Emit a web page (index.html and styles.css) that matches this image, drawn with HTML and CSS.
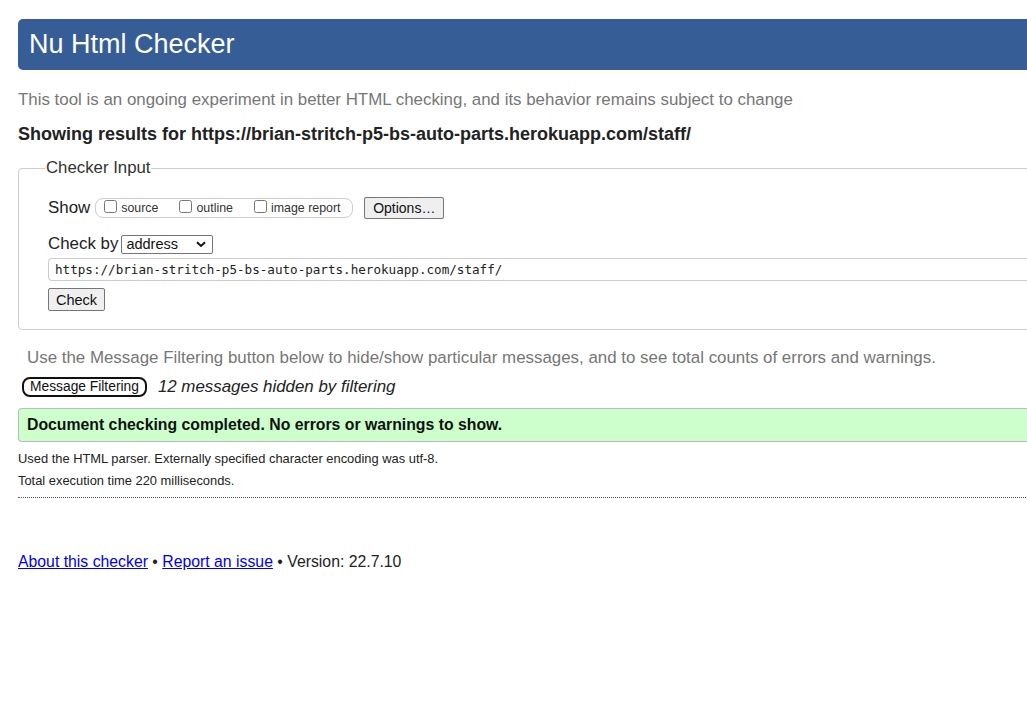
FILE: index.html
```html
<!DOCTYPE html>
<html lang="en">
<head>
<meta charset="utf-8">
<title>Showing results for https://brian-stritch-p5-bs-auto-parts.herokuapp.com/staff/ - Nu Html Checker</title>
<link rel="stylesheet" href="styles.css">
</head>
<body>
<div class="page">
  <h1 class="banner">Nu Html Checker</h1>
  <p class="tagline">This tool is an ongoing experiment in better HTML checking, and its behavior remains subject to change</p>
  <p class="results-for">Showing results for https://brian-stritch-p5-bs-auto-parts.herokuapp.com/staff/</p>
  <fieldset class="input-box">
    <legend class="input-legend">Checker Input</legend>
    <div class="show-row">
      <span class="show-label">Show</span>
      <span class="show-group">
        <label class="opt"><input type="checkbox" class="cb">source</label>
        <label class="opt"><input type="checkbox" class="cb">outline</label>
        <label class="opt"><input type="checkbox" class="cb">image report</label>
      </span>
      <button class="btn btn-options" type="button">Options…</button>
    </div>
    <div class="checkby-row">
      <span class="show-label">Check by</span>
      <span class="select">address<svg class="chev" width="10" height="7" viewBox="0 0 10 7"><path d="M1 1.2 L5 5 L9 1.2" fill="none" stroke="#111" stroke-width="1.9"/></svg></span>
    </div>
    <div class="url-field">https://brian-stritch-p5-bs-auto-parts.herokuapp.com/staff/</div>
    <div class="check-row"><button class="btn btn-check" type="button">Check</button></div>
  </fieldset>
  <p class="filter-note">Use the Message Filtering button below to hide/show particular messages, and to see total counts of errors and warnings.</p>
  <div class="filter-row">
    <button class="btn-filter" type="button">Message Filtering</button>
    <em class="hidden-count">12 messages hidden by filtering</em>
  </div>
  <div class="success">Document checking completed. No errors or warnings to show.</div>
  <p class="details">Used the HTML parser. Externally specified character encoding was utf-8.</p>
  <p class="details">Total execution time 220 milliseconds.</p>
  <hr class="dotted">
  <p class="footer"><a href="#">About this checker</a> • <a href="#">Report an issue</a> • Version: 22.7.10</p>
</div>
</body>
</html>
```
FILE: styles.css
```css
html, body {
  margin: 0;
  padding: 0;
  overflow: hidden;
  background: #fff;
}
body {
  font-family: "Liberation Sans", Arial, sans-serif;
  color: #222;
  font-size: 16px;
}
.page {
  width: 1060px;
  padding: 19px 0 0 18px;
}
.banner {
  margin: 0;
  height: 51px;
  background: #365d95;
  color: #fff;
  font-weight: normal;
  font-size: 27px;
  line-height: 51px;
  padding-left: 11px;
  border-radius: 5px;
}
.tagline {
  margin: 20px 0 0;
  color: #767676;
  font-size: 16.9px;
  line-height: 20px;
}
.results-for {
  margin: 14px 0 0;
  font-weight: bold;
  font-size: 18px;
  line-height: 20px;
  color: #222;
}
.input-box {
  margin: 14px 0 0;
  border: 1px solid #ccc;
  border-radius: 4px;
  padding: 4px 0 18px 29px;
  min-width: 0;
}
.input-legend {
  padding: 0 1px;
  margin-left: -3px;
  font-size: 16.8px;
  line-height: 20px;
  color: #333;
}
.show-row {
  display: flex;
  align-items: center;
  margin-top: 15px;
  height: 22px;
}
.show-label {
  font-size: 16.9px;
  color: #222;
  margin-right: 5px;
}
.show-group {
  display: inline-flex;
  align-items: center;
  border: 1px solid #ccc;
  border-radius: 8px;
  height: 20px;
  width: 258px;
  box-sizing: border-box;
  padding-left: 8px;
}
.opt {
  display: inline-flex;
  align-items: center;
  font-size: 12.4px;
  color: #333;
  margin-right: 21px;
}
.opt:last-child { margin-right: 0; }
.cb {
  margin: 0 4px 3px 0;
  width: 13px;
  height: 13px;
}
.btn {
  font-family: "Liberation Sans", Arial, sans-serif;
  background: #efefef;
  border: 1px solid #767676;
  border-radius: 2px;
  color: #111;
  padding: 0 6px;
  box-sizing: border-box;
}
.btn-options {
  margin-left: 11px;
  height: 22px;
  width: 80px;
  font-size: 14px;
}
.checkby-row {
  display: flex;
  align-items: center;
  margin-top: 15px;
  height: 20px;
}
.checkby-row .show-label { margin-right: 3px; }
.select {
  display: inline-flex;
  align-items: center;
  justify-content: space-between;
  width: 92px;
  height: 19px;
  box-sizing: border-box;
  border: 1px solid #767676;
  border-radius: 2px;
  font-size: 14.5px;
  padding: 0 6px 0 4px;
  color: #111;
}
.url-field {
  margin-top: 4px;
  height: 23px;
  box-sizing: border-box;
  border: 1px solid #ccc;
  border-right: none;
  border-radius: 4px 0 0 4px;
  font-family: "DejaVu Sans Mono", "Liberation Mono", monospace;
  font-size: 12.6px;
  line-height: 21px;
  padding-left: 6px;
  color: #222;
}
.check-row {
  margin-top: 7px;
}
.btn-check {
  height: 23px;
  width: 57px;
  font-size: 14.5px;
}
.filter-note {
  margin: 18px 0 0 9px;
  color: #767676;
  font-size: 16.9px;
  line-height: 20px;
}
.filter-row {
  display: flex;
  align-items: center;
  margin-top: 9px;
  margin-left: 4px;
  height: 20px;
}
.btn-filter {
  font-family: "Liberation Sans", Arial, sans-serif;
  font-size: 13.8px;
  background: #fff;
  color: #111;
  border: 2px solid #111;
  border-radius: 8px;
  height: 20px;
  padding: 0 6px;
  line-height: 14px;
}
.hidden-count {
  margin-left: 11px;
  font-size: 16.9px;
  color: #222;
}
.success {
  margin-top: 11px;
  height: 34px;
  box-sizing: border-box;
  background: #ccffcc;
  border: 1px solid #bbb;
  border-right: none;
  border-radius: 4px 0 0 4px;
  font-weight: bold;
  font-size: 15.8px;
  line-height: 31px;
  padding-left: 8px;
  color: #111;
}
.details {
  margin: 10px 0 0;
  font-size: 12.9px;
  line-height: 14px;
  color: #222;
}
.details + .details {
  margin-top: 8px;
}
.dotted {
  margin: 9px 0 0;
  border: none;
  border-top: 1px dotted #555;
  height: 0;
}
.footer {
  margin: 54px 0 0;
  font-size: 15.8px;
  line-height: 20px;
  color: #222;
}
.footer a {
  color: #0000ee;
}
```
